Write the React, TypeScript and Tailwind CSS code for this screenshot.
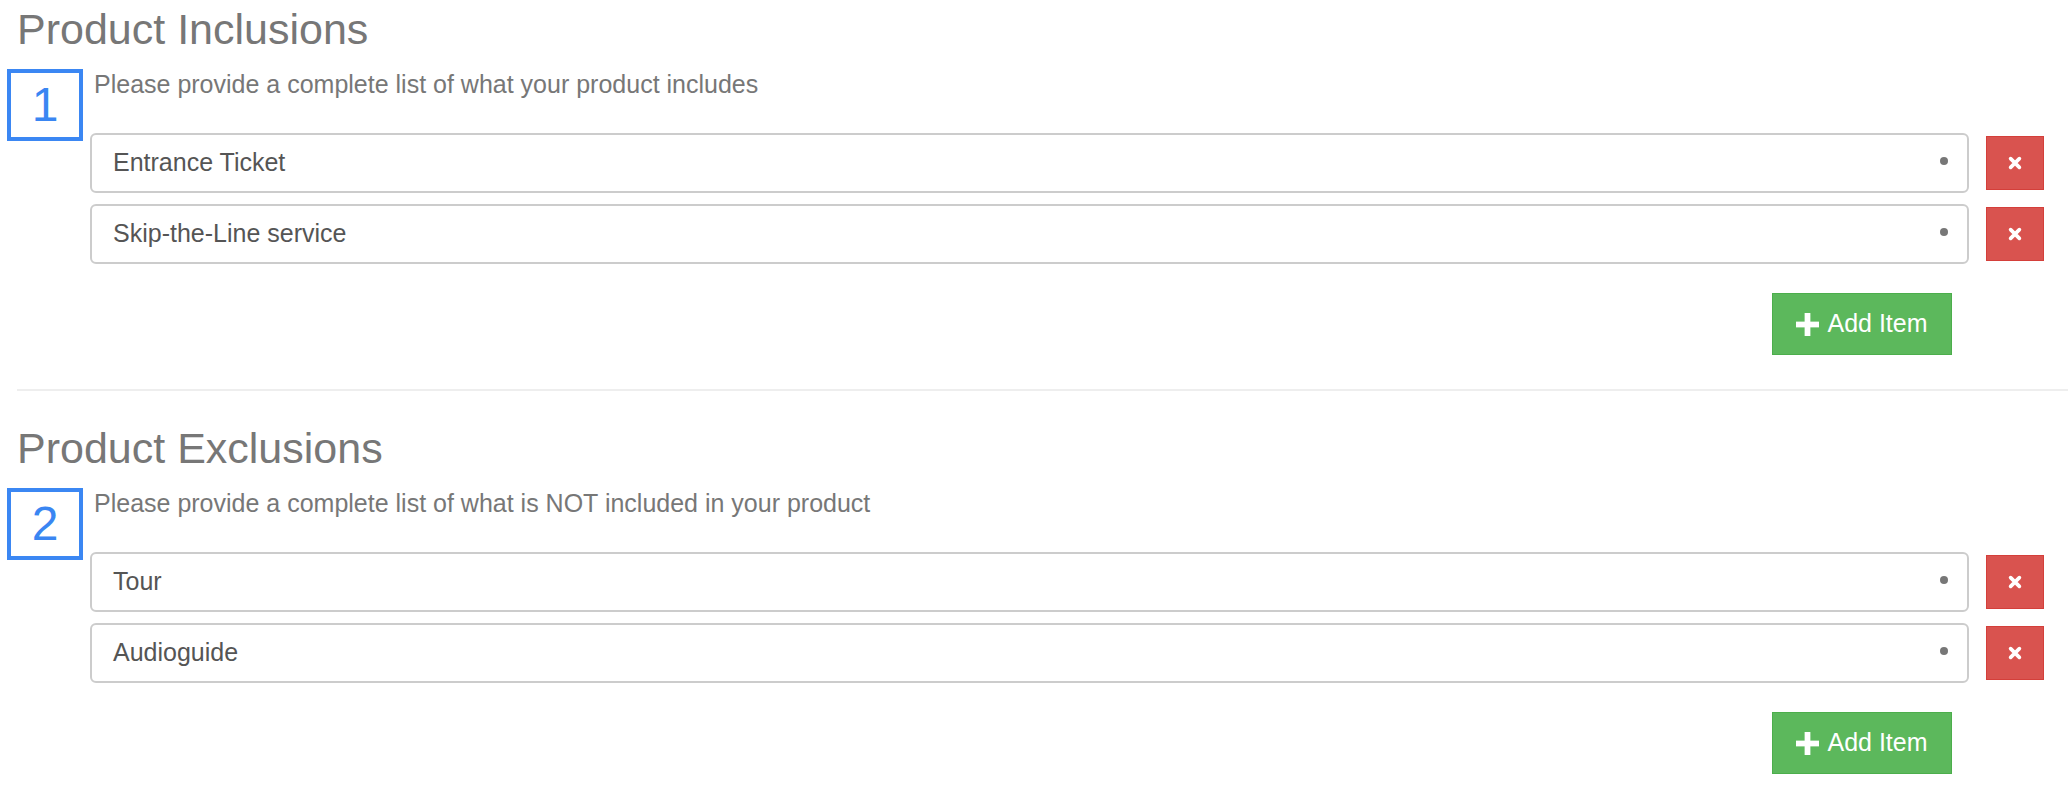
import React from "react";

const font = { fontFamily: '"Liberation Sans", Arial, sans-serif' };

function TimesIcon() {
  return (
    <svg width="14" height="14" viewBox="0 0 16 16">
      <path d="M3 3 L13 13 M13 3 L3 13" stroke="#fff" strokeWidth="4.2" strokeLinecap="round" />
    </svg>
  );
}

function PlusIcon() {
  return (
    <svg width="23" height="23" viewBox="0 0 24 24">
      <rect x="9" y="0" width="6" height="24" fill="#fff" />
      <rect x="0" y="9" width="24" height="6" fill="#fff" />
    </svg>
  );
}

function ItemRow({ value }: { value: string }) {
  return (
    <div className="flex items-center gap-[17px]">
      <div className="relative flex-1 h-[60px] border-2 border-[#cccccc] rounded-[6px] bg-white flex items-center pl-[21px] text-[25px] text-[#555555]">
        {value}
        <span className="absolute right-[19px] top-[22px] w-[8px] h-[8px] rounded-full bg-[#777777]" />
      </div>
      <button
        type="button"
        className="w-[58px] h-[54px] bg-[#d9534f] border border-[#d43f3a] flex items-center justify-center"
      >
        <TimesIcon />
      </button>
    </div>
  );
}

function Section({
  num,
  title,
  hint,
  items,
}: {
  num: string;
  title: string;
  hint: string;
  items: string[];
}) {
  return (
    <section className="relative">
      <h2 className="ml-[17px] pt-[6px] text-[43px] leading-[46px] text-[#777777] font-normal">
        {title}
      </h2>
      <div className="absolute left-[7px] top-[69px] w-[76px] h-[72px] border-4 border-[#3b87f3] flex items-center justify-center text-[48px] leading-none text-[#3a86f2] font-light">
        {num}
      </div>
      <p className="ml-[94px] mt-[19px] text-[25px] leading-[26px] text-[#777777]">{hint}</p>
      <div className="ml-[90px] mr-[24px] mt-[36px] flex flex-col gap-[11px]">
        {items.map((it) => (
          <ItemRow key={it} value={it} />
        ))}
      </div>
      <div className="flex justify-end mr-[116px] mt-[29px]">
        <button
          type="button"
          className="w-[180px] h-[62px] bg-[#5cb85c] border border-[#4cae4c] flex items-center justify-center gap-[8px] text-white text-[25px]"
        >
          <PlusIcon />
          Add Item
        </button>
      </div>
    </section>
  );
}

export default function App() {
  return (
    <main className="w-[2068px] h-[798px] bg-white overflow-hidden" style={font}>
      <Section
        num="1"
        title="Product Inclusions"
        hint="Please provide a complete list of what your product includes"
        items={["Entrance Ticket", "Skip-the-Line service"]}
      />
      <hr className="ml-[17px] mt-[34px] border-0 border-t-2 border-[#eeeeee]" />
      <div className="mt-[28px]">
        <Section
          num="2"
          title="Product Exclusions"
          hint="Please provide a complete list of what is NOT included in your product"
          items={["Tour", "Audioguide"]}
        />
      </div>
    </main>
  );
}
